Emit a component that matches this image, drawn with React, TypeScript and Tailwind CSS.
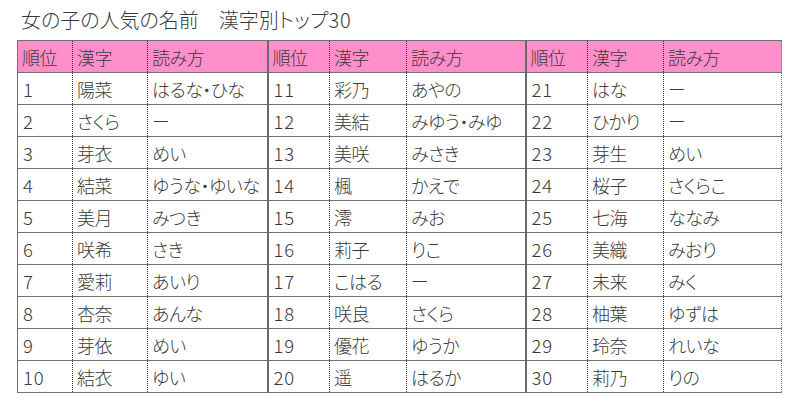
import React from "react";

const rows: [string, string, string][][] = [
  [
    ["1", "陽菜", "はるな・ひな"],
    ["2", "さくら", "ー"],
    ["3", "芽衣", "めい"],
    ["4", "結菜", "ゆうな・ゆいな"],
    ["5", "美月", "みつき"],
    ["6", "咲希", "さき"],
    ["7", "愛莉", "あいり"],
    ["8", "杏奈", "あんな"],
    ["9", "芽依", "めい"],
    ["10", "結衣", "ゆい"],
  ],
  [
    ["11", "彩乃", "あやの"],
    ["12", "美結", "みゆう・みゆ"],
    ["13", "美咲", "みさき"],
    ["14", "楓", "かえで"],
    ["15", "澪", "みお"],
    ["16", "莉子", "りこ"],
    ["17", "こはる", "ー"],
    ["18", "咲良", "さくら"],
    ["19", "優花", "ゆうか"],
    ["20", "遥", "はるか"],
  ],
  [
    ["21", "はな", "ー"],
    ["22", "ひかり", "ー"],
    ["23", "芽生", "めい"],
    ["24", "桜子", "さくらこ"],
    ["25", "七海", "ななみ"],
    ["26", "美織", "みおり"],
    ["27", "未来", "みく"],
    ["28", "柚葉", "ゆずは"],
    ["29", "玲奈", "れいな"],
    ["30", "莉乃", "りの"],
  ],
];

const widths = [
  ["w-[55px]", "w-[75px]", "w-[120px]"],
  ["w-[62px]", "w-[77px]", "w-[119px]"],
  ["w-[62px]", "w-[76px]", "w-[118px]"],
];

function Cells({ g, vals, header }: { g: number; vals: string[]; header?: boolean }) {
  return (
    <>
      {vals.map((v, i) => {
        const w = widths[g][i];
        let cls = "";
        if (i === 0) {
          cls = g === 0 ? "border-l border-l-[#707070]" : "border-l-2 border-l-[#6a6a6a]";
        } else {
          cls = "border-l border-dotted border-l-[#333]";
        }
        if (g === 2 && i === 2) cls += " border-r border-r-[#707070]";
        const font =
          i === 0 && !header
            ? "text-[18.5px] tracking-[0.8px] pl-[5px]"
            : "text-[18px] tracking-[-0.5px] pl-[4px]";
        return (
          <td
            key={i}
            className={`${w} ${cls} ${font} font-light h-[32px] align-middle whitespace-nowrap ${header ? "bg-[#ff8fcb]" : ""}`}
          >
            {v}
          </td>
        );
      })}
    </>
  );
}

export default function App() {
  return (
    <div className="w-[800px] h-[414px] bg-white text-[#3a3a3a] [font-feature-settings:'palt'] overflow-hidden font-['Noto_Sans_CJK_JP',sans-serif]">
      <div className="pl-[21px] pt-[7px] h-[40px] text-[20px] leading-[26px] font-light">
        女の子の人気の名前　漢字別トップ<span className="tracking-[0.8px]">30</span>
      </div>
      <table className="ml-[17px] border-collapse table-fixed leading-[20px]">
        <tbody>
          <tr className="border-t border-b border-[#707070] h-[31px]">
            {[0, 1, 2].map((g) => (
              <Cells key={g} g={g} vals={["順位", "漢字", "読み方"]} header />
            ))}
          </tr>
          {Array.from({ length: 10 }).map((_, r) => (
            <tr key={r} className="border-b border-[#707070]">
              {[0, 1, 2].map((g) => (
                <Cells key={g} g={g} vals={rows[g][r]} />
              ))}
            </tr>
          ))}
        </tbody>
      </table>
    </div>
  );
}
